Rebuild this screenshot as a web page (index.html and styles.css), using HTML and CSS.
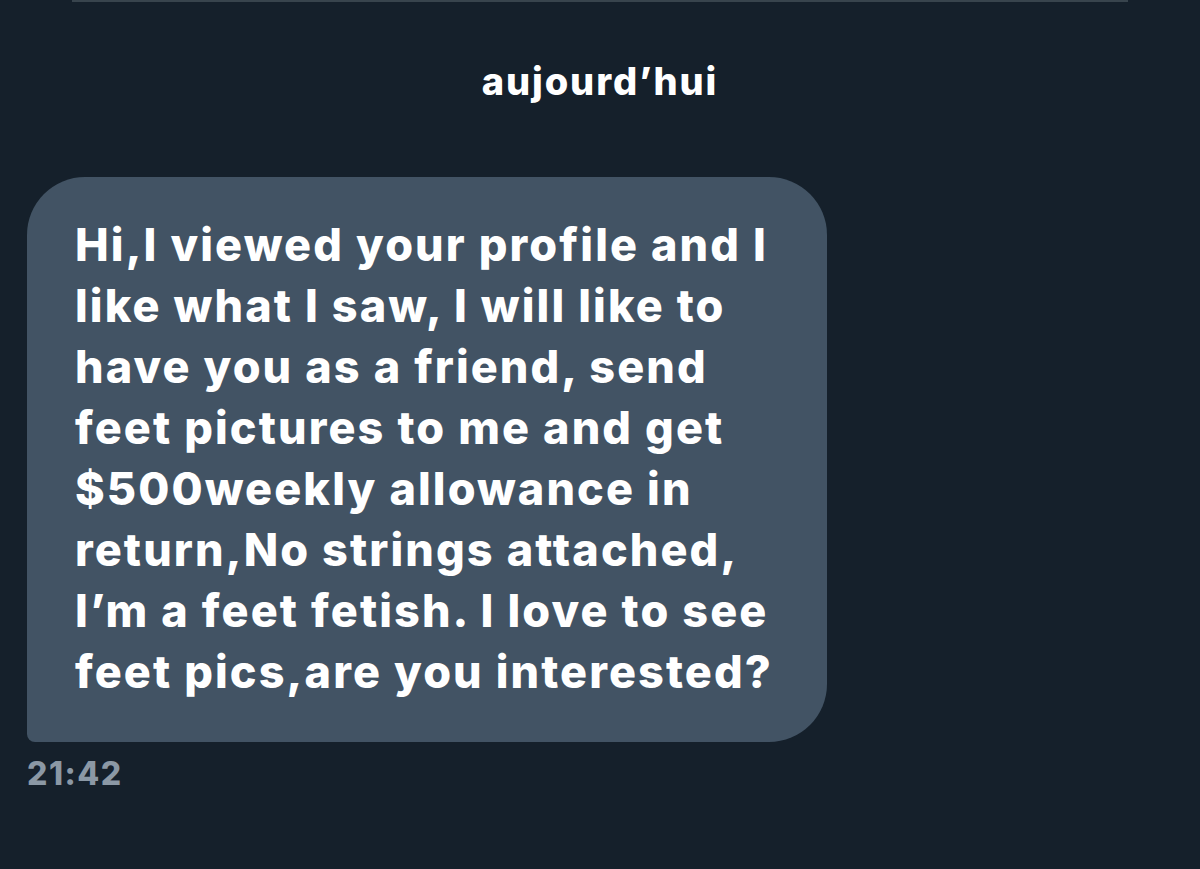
FILE: index.html
```html
<!DOCTYPE html>
<html lang="fr">
<head>
    <meta charset="UTF-8">
    <meta name="viewport" content="width=device-width, initial-scale=1.0">
    <title>Messages</title>
    <link rel="stylesheet" href="styles.css">
</head>
<body>
    <div class="top-line"></div>
    <div class="conversation">
        <div class="day">aujourd’hui</div>
        <div class="message">
            <div class="bubble">
                Hi,I viewed your profile and I<br>
                like what I saw, I will like to<br>
                have you as a friend, send<br>
                feet pictures to me and get<br>
                $500weekly allowance in<br>
                return,No strings attached,<br>
                I’m a feet fetish. I love to see<br>
                feet pics,are you interested?
            </div>
            <div class="time">21:42</div>
        </div>
    </div>
</body>
</html>
```

FILE: styles.css
```css
body {
    font-family: Inter, "Open Sans", Arial, sans-serif;
    background-color: #15202b;
    color: #fff;
    margin: 0;
    padding: 0;
    height: 869px;
    overflow: hidden;
}
.top-line {
    height: 2px;
    margin: 0 72px;
    background-color: #38444d;
}
.conversation {
    padding: 0 27px;
}
.day {
    text-align: center;
    font-size: 38px;
    font-weight: 800;
    letter-spacing: 1.9px;
    margin-top: 55px;
    line-height: 48px;
}
.message {
    margin-top: 72px;
}
.bubble {
    width: 704px;
    background-color: #425364;
    border-radius: 58px 58px 58px 8px;
    padding: 37px 48px 40px;
    font-size: 45px;
    font-weight: 800;
    letter-spacing: 2.1px;
    line-height: 61px;
}
.time {
    margin-top: 12px;
    font-size: 32px;
    font-weight: 800;
    letter-spacing: 1.5px;
    color: #8b98a5;
}
```
